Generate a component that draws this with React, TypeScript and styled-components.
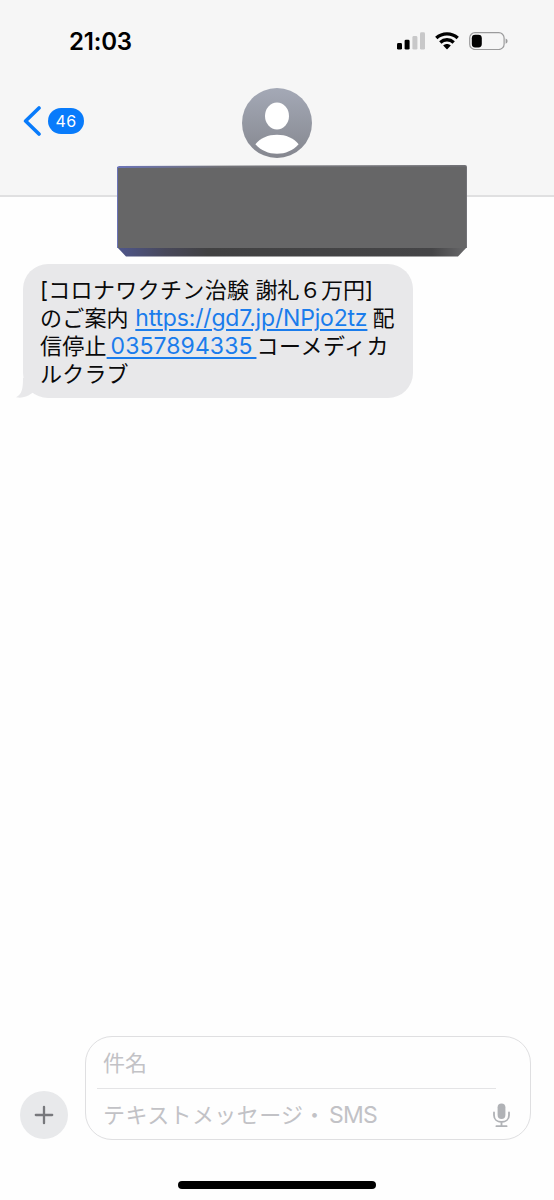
import React from "react";
import styled, { createGlobalStyle } from "styled-components";

const App = () => {
  return (
    <>
      <GlobalStyle />
      <Phone>
        <Header>
          <StatusBar>
            <Time>21:03</Time>
            <StatusIcons>
              <SignalIcon />
              <WifiIcon />
              <BatteryIcon />
            </StatusIcons>
          </StatusBar>
          <NavBar>
            <BackButton>
              <BackIcon />
              <Unread>46</Unread>
            </BackButton>
            <AvatarIcon />
          </NavBar>
          <NameCover>
            <CoverShape />
          </NameCover>
        </Header>
        <Conversation>
          <Bubble>
            <Line>
              <Run>[</Run>
              <Run $track={0.35}>コロナワクチン治験</Run>
              <Run $indent={6} $track={-0.1}>
                謝礼６万円
              </Run>
              <Run>]</Run>
            </Line>
            <Line>
              <Run>のご案内</Run>
              <Link href="#" $indent={6.5} $track={-0.18}>
                https://gd7.jp/NPjo2tz
              </Link>
              <Run $indent={5}>配</Run>
            </Line>
            <Line>
              <Run>信停止</Run>
              <Link href="#" $track={0.08}>
                {" 0357894335 "}
              </Link>
              <Run $track={0.5}>コーメディカ</Run>
            </Line>
            <Line>
              <Run>ルクラブ</Run>
            </Line>
            <BubbleTail />
          </Bubble>
        </Conversation>
        <Composer>
          <AddButton aria-label="追加">
            <PlusIcon />
          </AddButton>
          <InputBox>
            <Subject>件名</Subject>
            <MessageRow>
              <Placeholder>
                <span>テキストメッセージ・</span>
                <Latin>SMS</Latin>
              </Placeholder>
              <MicIcon />
            </MessageRow>
          </InputBox>
        </Composer>
        <HomeArea>
          <HomeIndicator />
        </HomeArea>
      </Phone>
    </>
  );
};

export default App;

const SignalIcon = () => (
  <svg width="28" height="18" viewBox="0 0 28 18">
    <rect x="0" y="11" width="5" height="6.6" rx="1.4" fill="#000" />
    <rect x="7.6" y="7.7" width="5" height="9.9" rx="1.4" fill="#000" />
    <rect x="15.4" y="4" width="5" height="13.6" rx="1.4" fill="#c8c8c9" />
    <rect x="23" y="0.3" width="5" height="17.3" rx="1.4" fill="#c8c8c9" />
  </svg>
);

const WifiIcon = () => (
  <svg width="24" height="18" viewBox="0 0 24 18">
    <g fill="none" stroke="#000" strokeWidth="3.4">
      <path d="M1.3 6.1C7.3 .5 16.7 .5 22.7 6.1" />
      <path d="M5.3 10.4C9.1 6.9 14.9 6.9 18.7 10.4" />
    </g>
    <path
      d="M8.2 13.5C10.4 11.5 13.6 11.5 15.8 13.5L12.5 17Q12 17.5 11.5 17Z"
      fill="#000"
    />
  </svg>
);

const BatteryIcon = () => (
  <svg width="39" height="18" viewBox="0 0 39 18">
    <rect
      x="0.7"
      y="0.7"
      width="34.4"
      height="16.8"
      rx="5.3"
      fill="none"
      stroke="#9b9b9c"
      strokeWidth="1.2"
    />
    <rect x="2.8" y="2.8" width="10" height="12.6" rx="3.4" fill="#000" />
    <path d="M36.6 6.4Q38.6 7.2 38.6 9.1T36.6 11.8Z" fill="#9b9b9c" />
  </svg>
);

const BackIcon = () => (
  <svg width="18" height="30" viewBox="0 0 18 30">
    <path
      d="M16 2L2.6 15L16 28"
      fill="none"
      stroke="#087bfb"
      strokeWidth="3.6"
      strokeLinecap="round"
      strokeLinejoin="round"
    />
  </svg>
);

const AvatarIcon = () => (
  <svg width="70" height="70" viewBox="0 0 70 70">
    <defs>
      <linearGradient id="avatar" x1="0" y1="0" x2="0" y2="1">
        <stop offset="0" stopColor="#a4a9b6" />
        <stop offset="1" stopColor="#85878f" />
      </linearGradient>
    </defs>
    <circle cx="35" cy="35" r="35" fill="url(#avatar)" />
    <ellipse cx="35" cy="28" rx="12" ry="13.4" fill="#fff" />
    <path
      d="M13.4 56.2C18.5 50 26 46.8 35 46.8S51.5 50 56.6 56.2C51 62.5 43.5 65.7 35 65.7S19 62.5 13.4 56.2Z"
      fill="#fff"
    />
  </svg>
);

const CoverShape = () => (
  <svg width="350" height="92" viewBox="0 0 350 92">
    <defs>
      <linearGradient id="edge" x1="0" y1="0" x2="1" y2="0">
        <stop offset="0" stopColor="#4e568c" />
        <stop offset="0.14" stopColor="#48485a" />
        <stop offset="0.26" stopColor="#414142" />
        <stop offset="0.9" stopColor="#454547" />
        <stop offset="1" stopColor="#69696b" />
      </linearGradient>
      <linearGradient id="rim" x1="0" y1="0" x2="1" y2="0">
        <stop offset="0" stopColor="#6b74b8" />
        <stop offset="0.3" stopColor="#737378" />
      </linearGradient>
    </defs>
    <path d="M0 82H350L341 91.5H9Z" fill="url(#edge)" />
    <path d="M0 2L2 1L348 0Q350 0 350 2V83H0Z" fill="url(#rim)" />
    <path d="M1 3L349 1.5V83H1Z" fill="#666667" />
  </svg>
);

const BubbleTail = () => (
  <TailSvg width="24" height="20" viewBox="0 0 24 20">
    <path d="M7 0C7 11 6 16 0 19.3C6 20.3 11 19 15.5 15.5L24 10V0Z" />
  </TailSvg>
);

const PlusIcon = () => (
  <svg width="20" height="20" viewBox="0 0 20 20">
    <path
      d="M10 1.8V18.2M1.8 10H18.2"
      stroke="#77787c"
      strokeWidth="2.3"
      strokeLinecap="round"
    />
  </svg>
);

const MicIcon = () => (
  <svg width="17" height="25" viewBox="0 0 17 25">
    <rect x="4.6" y="0.4" width="7.8" height="15.6" rx="3.9" fill="#b0b2b6" />
    <path
      d="M1 9.4V12.2C1 16.4 4.2 19 8.5 19S16 16.4 16 12.2V9.4M8.5 19V23M3.4 23.2H13.6"
      fill="none"
      stroke="#b0b2b6"
      strokeWidth="1.8"
      strokeLinecap="round"
    />
  </svg>
);

const GlobalStyle = createGlobalStyle`
  * {
    box-sizing: border-box;
  }

  body {
    margin: 0;
    background-color: #fefefe;
    font-family: Inter, "Noto Sans CJK JP", sans-serif;
  }

  svg {
    display: block;
    flex-shrink: 0;
  }
`;

const Phone = styled.div`
  width: 554px;
  height: 1200px;
  display: flex;
  flex-direction: column;
  overflow: hidden;
`;

const Header = styled.header`
  position: relative;
  height: 197px;
  background-color: #f6f6f6;
  border-bottom: 2px solid #e0e0e1;
`;

const StatusBar = styled.div`
  height: 82px;
  padding: 0 46px 0 69px;
  display: flex;
  align-items: center;
  justify-content: space-between;
`;

const Time = styled.div`
  font-size: 24px;
  font-weight: 600;
  letter-spacing: -0.2px;
`;

const StatusIcons = styled.div`
  display: flex;
  align-items: center;
  gap: 10px;
`;

const NavBar = styled.div`
  display: grid;
  grid-template-columns: 1fr 70px 1fr;
  padding: 6px 0 0 23px;
  margin-right: 23px;
`;

const BackButton = styled.div`
  height: 66px;
  display: flex;
  align-items: center;
  gap: 7px;
`;

const Unread = styled.span`
  width: 36px;
  height: 26px;
  border-radius: 13px;
  background-color: #087bfb;
  color: #fff;
  font-size: 16px;
  letter-spacing: 0.3px;
  line-height: 26px;
  text-align: center;
`;

const NameCover = styled.div`
  position: absolute;
  top: 165px;
  left: 117px;
`;

const Conversation = styled.main`
  flex: 1;
  padding: 67px 23px 0;
`;

const Bubble = styled.div`
  position: relative;
  width: 390px;
  height: 134px;
  padding: 12px 17px;
  border-radius: 25px;
  background-color: #e8e8ea;
`;

const TailSvg = styled.svg`
  position: absolute;
  left: -7px;
  bottom: 0;
  fill: #e8e8ea;
`;

const Line = styled.div`
  position: relative;
  z-index: 1;
  height: 28px;
  display: flex;
  align-items: baseline;
  font-size: 22px;
  line-height: 28px;
  white-space: pre;
  color: #0a0a0b;
`;

const Run = styled.span<{ $track?: number; $indent?: number }>`
  letter-spacing: ${({ $track = 0.2 }) => $track}px;
  margin-left: ${({ $indent = 0 }) => $indent}px;
`;

const Link = styled.a<{ $track: number; $indent?: number }>`
  margin-left: ${({ $indent = 0 }) => $indent}px;
  font-size: 23px;
  letter-spacing: ${({ $track }) => $track}px;
  word-spacing: -2.6px;
  color: #1a7cec;
  text-decoration: underline;
  text-decoration-thickness: 1.5px;
  text-underline-offset: 2.5px;
`;

const Composer = styled.footer`
  display: flex;
  align-items: flex-end;
  gap: 17px;
  padding: 0 23px 0 20px;
`;

const AddButton = styled.button`
  width: 48px;
  height: 48px;
  margin-bottom: 1px;
  padding: 0;
  border: 0;
  border-radius: 50%;
  background-color: #e8e9eb;
  display: flex;
  align-items: center;
  justify-content: center;
`;

const InputBox = styled.div`
  flex: 1;
  height: 104px;
  padding: 0 19px 0 11px;
  border: 1.5px solid #dfdfe1;
  border-radius: 27px;
  color: #c2c2c6;
  font-size: 22px;
`;

const Subject = styled.div`
  height: 52px;
  margin-right: 15px;
  padding-left: 6px;
  border-bottom: 1px solid #e4e4e6;
  line-height: 53px;
`;

const MessageRow = styled.div`
  height: 51px;
  padding: 1px 1px 0 6px;
  display: flex;
  align-items: center;
  justify-content: space-between;
`;

const Placeholder = styled.div`
  display: flex;
  align-items: baseline;
  padding-bottom: 4px;
  letter-spacing: 0.4px;
  white-space: nowrap;
`;

const Latin = styled.span`
  margin-left: 3px;
  font-size: 23px;
  letter-spacing: -0.7px;
`;

const HomeArea = styled.div`
  height: 60px;
  padding-top: 41px;
  display: flex;
  justify-content: center;
`;

const HomeIndicator = styled.div`
  width: 198px;
  height: 8px;
  border-radius: 4px;
  background-color: #000;
`;
